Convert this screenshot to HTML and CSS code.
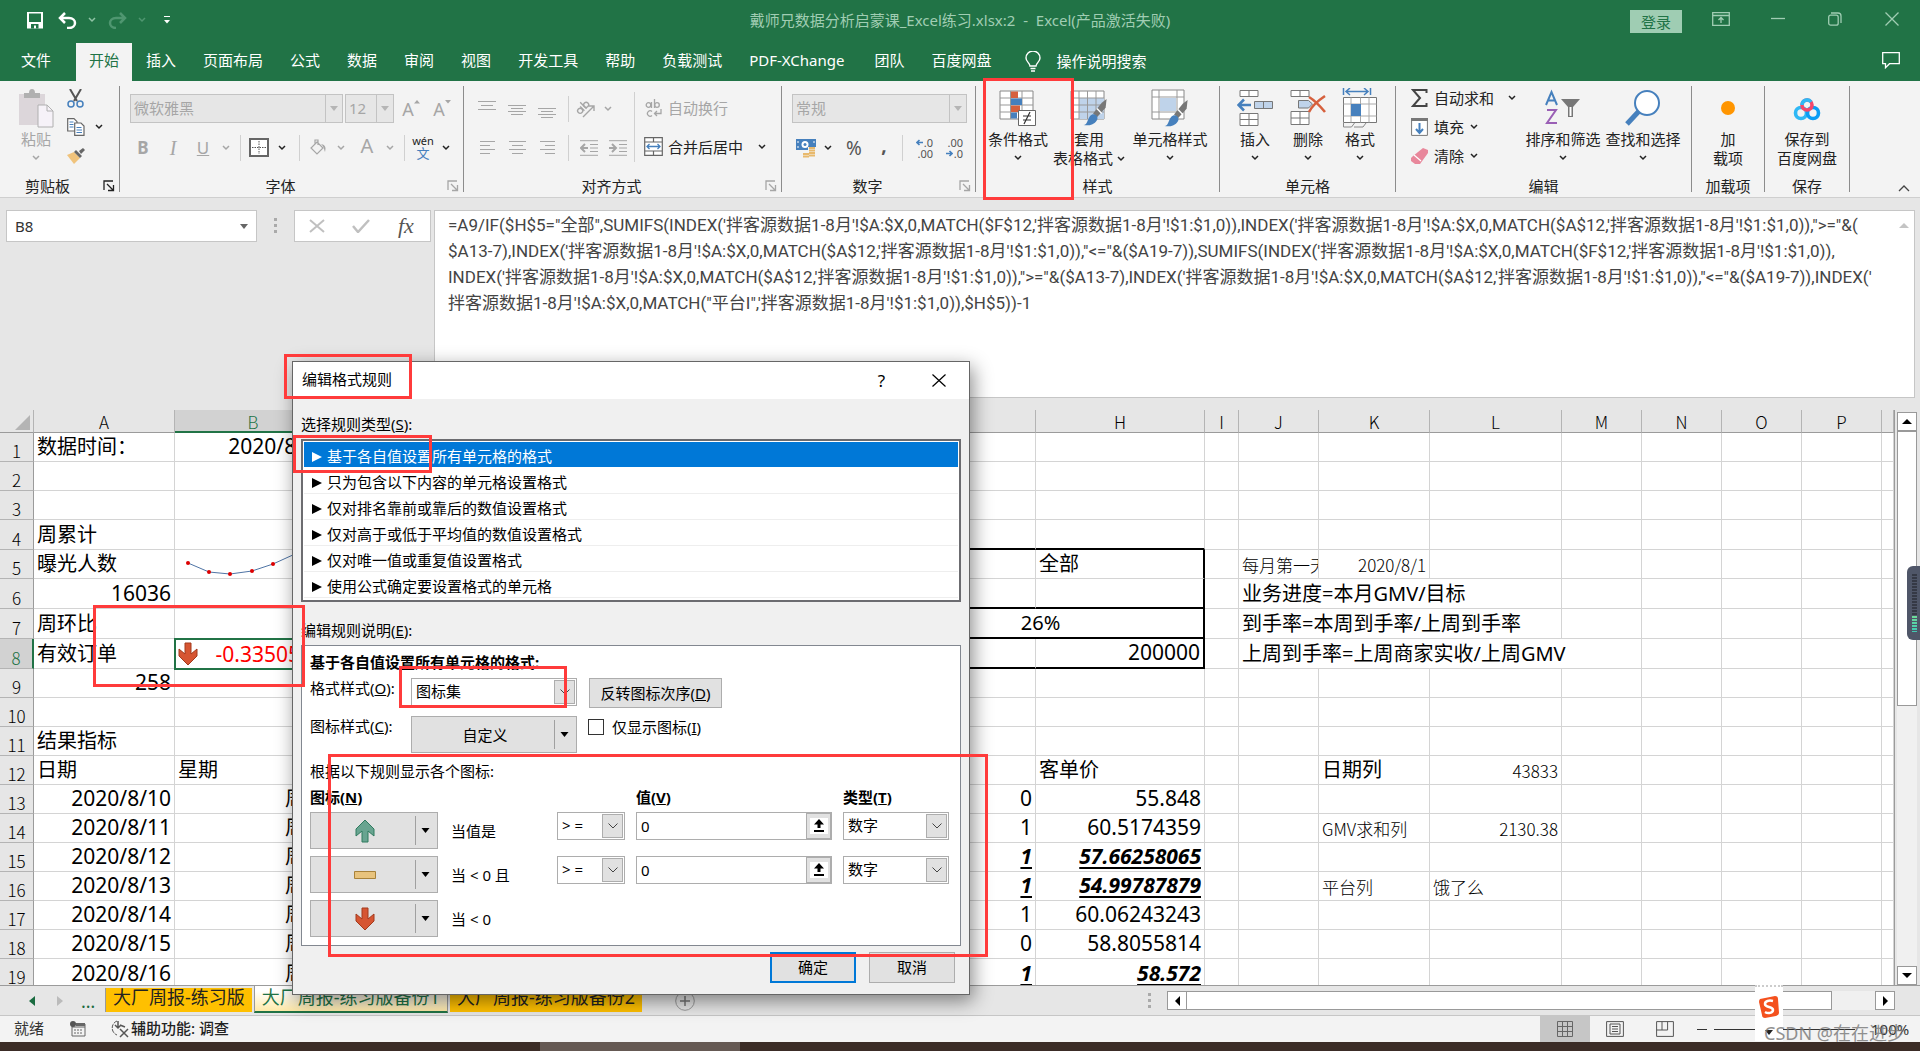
FILE: index.html
```html
<!DOCTYPE html>
<html lang="zh-CN">
<head>
<meta charset="utf-8">
<title>戴师兄数据分析启蒙课_Excel练习.xlsx:2 - Excel</title>
<link rel="stylesheet" href="styles.css">
</head>
<body>
<svg class="defs" width="0" height="0" aria-hidden="true">
  <symbol id="chev" viewBox="0 0 8 6"><path d="M1 1l3 3 3-3" fill="none" stroke="currentColor" stroke-width="1.5"/></symbol>
  <symbol id="launch" viewBox="0 0 12 12"><path d="M1 10V1h9M4 4l6 6M10.500 5v5.500H5" fill="none" stroke="currentColor" stroke-width="1.300"/></symbol>
  <symbol id="tri" viewBox="0 0 8 5"><path d="M0 0h8L4 5z" fill="currentColor"/></symbol>
  <symbol id="thin" viewBox="0 0 10 6"><path d="M.5.5L5 5 9.500.5" fill="none" stroke="#444"/></symbol>
  <symbol id="brush" viewBox="0 0 26 30"><path d="M25 2l-1 9-9 10-4-4 9-11z" fill="#777"/><path d="M15 12l5 5" stroke="#fff" stroke-width="1.500"/><path d="M1 29c5 0 4-9 9-11 4-1 7 3 5 6-3 5-9 6-14 5z" fill="#4680bd"/></symbol>
  <symbol id="up" viewBox="0 0 20 24"><path d="M10 1l9 9v7l-6-5v11H7V12l-6 5v-7z" fill="#68a490" stroke="#2f7a5f"/></symbol>
  <symbol id="down" viewBox="0 0 20 24"><path d="M10 23l9-9V7l-6 5V1H7v11L1 7v7z" fill="#d65532" stroke="#a33a1c"/></symbol>
  <symbol id="pick" viewBox="0 0 18 16"><path d="M0 0h18v16H0z" fill="#fff"/><path d="M9 1l5 5.500h-3.500V10h-3V6.500H4zM4 12h10v2H4z"/></symbol>
</svg>

<header class="titlebar">
  <div class="quick">
    <button class="ib w30" aria-label="保存"><svg width="16" height="17" viewBox="0 0 16 17"><path d="M0 0h16v16.500H0z" fill="#fff"/><path d="M2 1.500h12V10H2zM4 12h7.500v4.500H9V13.500H7v3H4z" fill="#217346"/></svg></button>
    <button class="ib w30" aria-label="撤消"><svg width="19" height="17" viewBox="0 0 19 17"><path d="M7 1L2 6l5 5M2 6h9c8 0 8 10 0 10H9" fill="none" stroke="#fff" stroke-width="2.500"/></svg></button>
    <button class="ib w16 pale"><svg width="8" height="6"><use href="#chev"/></svg></button>
    <button class="ib w30 faint" aria-label="恢复"><svg width="19" height="17" viewBox="0 0 19 17"><path d="M12 1l5 5-5 5M17 6H8C0 6 0 16 8 16" fill="none" stroke="currentColor" stroke-width="2.500"/></svg></button>
    <button class="ib w16 faint"><svg width="8" height="6"><use href="#chev"/></svg></button>
    <button class="ib w30 more"><svg width="6" height="8" viewBox="0 0 6 8"><path d="M0 .5h6" stroke="#fff"/><path d="M0 4h6L3 7.500z" fill="#fff"/></svg></button>
  </div>
  <h1>戴师兄数据分析启蒙课_Excel练习.xlsx:2&nbsp; -&nbsp; Excel(产品激活失败)</h1>
  <div class="wincontrols">
    <button class="login">登录</button>
    <button class="wc" aria-label="功能区选项"><svg width="18" height="14" viewBox="0 0 18 14"><path d="M.7.7h16.600v12.600H.7zM1 3.500h16M9 11V6M6.500 8L9 5.500 11.500 8" fill="none" stroke="currentColor" stroke-width="1.300"/></svg></button>
    <button class="wc" aria-label="最小化"><svg width="14" height="14" viewBox="0 0 14 14"><path d="M0 6.500h14" stroke="currentColor" stroke-width="1.300"/></svg></button>
    <button class="wc" aria-label="还原"><svg width="14" height="14" viewBox="0 0 14 14"><rect x=".7" y="3.200" width="9.500" height="10" rx="2" fill="none" stroke="currentColor" stroke-width="1.300"/><path d="M3 1h7q3 0 3 3v7" fill="none" stroke="currentColor" stroke-width="1.300"/></svg></button>
    <button class="wc" aria-label="关闭"><svg width="14" height="14" viewBox="0 0 14 14"><path d="M.5.5l13 13M13.500.5l-13 13" stroke="currentColor" stroke-width="1.300"/></svg></button>
  </div>
</header>

<nav class="tabs">
  <a href="#" class="file">文件</a><a href="#" class="on">开始</a><a href="#">插入</a><a href="#">页面布局</a><a href="#">公式</a><a href="#">数据</a><a href="#">审阅</a><a href="#">视图</a><a href="#">开发工具</a><a href="#">帮助</a><a href="#">负载测试</a><a href="#" class="pdf">PDF-XChange</a><a href="#">团队</a><a href="#">百度网盘</a>
  <a href="#" class="tell"><svg width="16" height="21" viewBox="0 0 16 21"><path d="M5 15c0-3-4-4-4-8a7 7 0 0 1 14 0c0 4-4 5-4 8zM5.500 17.500h5M6 20h4" fill="none" stroke="#fff" stroke-width="1.400"/></svg>操作说明搜索</a>
  <button class="comment" aria-label="批注"><svg width="18" height="17" viewBox="0 0 18 17"><path d="M.7.7h16.600v11H7.500l-4 4v-4H.7z" fill="none" stroke="#fff" stroke-width="1.300"/></svg></button>
</nav>

<section class="ribbon">
  <div class="group g1">
    <div class="body">
      <button class="big paste"><svg width="36" height="40" viewBox="0 0 36 40"><path d="M1 6h26v31H1z" fill="#dcd6da"/><path d="M6 5h5a3 4 0 0 1 6 0h5v5H6z" fill="#b0b0b0"/><path d="M20 17h9l6 6v16H20z" fill="#f6f2f8" stroke="#b0b0b0"/><path d="M29 17v6h6" fill="none" stroke="#b0b0b0"/></svg><span>粘贴</span><svg width="8" height="6"><use href="#chev"/></svg></button>
      <div class="stack">
        <button class="ib" aria-label="剪切"><svg width="17" height="19" viewBox="0 0 17 19"><path d="M3 0l7 12M14 0L7 12" stroke="#555" stroke-width="2"/><circle cx="4" cy="15" r="3" fill="none" stroke="#4680bd" stroke-width="1.500"/><circle cx="13" cy="15" r="3" fill="none" stroke="#4680bd" stroke-width="1.500"/></svg></button>
        <button class="ib" aria-label="复制"><svg width="18" height="18" viewBox="0 0 18 18"><path d="M.7.7H7l3 3V13H.7z" fill="#fff" stroke="#666" stroke-width="1.200"/><path d="M7.700 5H14l3 3v9.300H7.700z" fill="#fff" stroke="#666" stroke-width="1.200"/><path d="M2.500 4h4M2.500 6.500h4M2.500 9h4M9.500 9.500h5M9.500 12h5.500M9.500 14.500h5.500" stroke="#4680bd"/></svg><svg class="dd" width="8" height="6"><use href="#chev"/></svg></button>
        <button class="ib" aria-label="格式刷"><svg width="18" height="16" viewBox="0 0 18 16"><path d="M0 7l7-3 6 6-6 6z" fill="#f0c37c"/><path d="M7 4l2-2 6 6-2 2zM12 3l4-3 2 2-4 4z" fill="#666"/></svg></button>
      </div>
    </div>
    <div class="cap"><span>剪贴板</span><svg width="12" height="12"><use href="#launch"/></svg></div>
  </div>

  <div class="group g2">
    <div class="body rows">
      <div class="row r1">
        <label class="combo font"><select disabled aria-label="字体"><option>微软雅黑</option></select><svg width="8" height="5"><use href="#tri"/></svg></label>
        <label class="combo size"><select disabled aria-label="字号"><option>12</option></select><svg width="8" height="5"><use href="#tri"/></svg></label>
        <button class="ib w30 dim grow" disabled>A<svg width="6" height="4" viewBox="0 0 6 4"><path d="M0 3.500h6L3 0z" fill="currentColor"/></svg></button>
        <button class="ib w28 dim grow" disabled>A<svg width="6" height="4" viewBox="0 0 6 4"><path d="M0 0h6L3 3.500z" fill="currentColor"/></svg></button>
      </div>
      <div class="row r2">
        <button class="ib w30 dim glyph" disabled><b>B</b></button><button class="ib w30 dim glyph ital" disabled><i>I</i></button><button class="ib w30 dim glyph" disabled><u>U</u></button><button class="ib w16 dim" disabled><svg width="8" height="6"><use href="#chev"/></svg></button>
        <i class="sep"></i>
        <button class="ib w24" aria-label="边框"><svg width="20" height="19" viewBox="0 0 20 19"><path d="M1 1h18v17H1z" fill="#fff" stroke="#666" stroke-width="2"/><path d="M10 3v13M3 9.500h14" stroke="#555" stroke-dasharray="1.500 1"/></svg></button><button class="ib w22"><svg width="8" height="6"><use href="#chev"/></svg></button>
        <i class="sep"></i>
        <button class="ib w24 dim" disabled aria-label="填充颜色"><svg width="17" height="17" viewBox="0 0 17 17"><path d="M7 3l6 6-6 6-6-6zM5 5V1h3v5" fill="none" stroke="currentColor" stroke-width="1.200"/><path d="M11 5c5 1 5 4 4 8-1-3-1-5-4-8z" fill="currentColor"/></svg></button><button class="ib w22 dim" disabled><svg width="8" height="6"><use href="#chev"/></svg></button>
        <button class="ib w30 dim fontcolor" disabled>A</button><button class="ib w16 dim" disabled><svg width="8" height="6"><use href="#chev"/></svg></button>
        <i class="sep"></i>
        <button class="ib w24 wen"><span>wén</span><span>文</span></button><button class="ib w22"><svg width="8" height="6"><use href="#chev"/></svg></button>
      </div>
    </div>
    <div class="cap"><span>字体</span><svg class="dim" width="12" height="12"><use href="#launch"/></svg></div>
  </div>

  <div class="group g3">
    <div class="body cols">
      <div class="rows">
        <div class="row r1">
          <button class="ib w30 dim" disabled aria-label="顶端对齐"><svg width="18" height="18" viewBox="0 0 18 18"><path d="M0 1.500h18M3 5.500h12M0 9.500h18" stroke="currentColor"/></svg></button><button class="ib w30 dim" disabled aria-label="垂直居中"><svg width="18" height="18" viewBox="0 0 18 18"><path d="M0 5.500h18M3 8.500h12M0 11.500h18M3 14.500h12" stroke="currentColor"/></svg></button><button class="ib w30 dim" disabled aria-label="底端对齐"><svg width="18" height="18" viewBox="0 0 18 18"><path d="M0 8.500h18M3 11.500h12M0 14.500h18M3 17.500h12" stroke="currentColor"/></svg></button>
          <i class="sep"></i>
          <button class="ib w22 dim" disabled aria-label="方向"><svg width="20" height="20" viewBox="0 0 20 20"><path d="M7 18L18 7M13 7h5v5" fill="none" stroke="currentColor" stroke-width="1.400"/><g fill="none" stroke="currentColor" stroke-width="1.400" transform="rotate(-45 7 9)"><circle cx="3" cy="9" r="2.500"/><path d="M6 6v6M9 3v9"/><circle cx="11.500" cy="9" r="2.500"/></g></svg></button><button class="ib w22 dim" disabled><svg width="8" height="6"><use href="#chev"/></svg></button>
        </div>
        <div class="row r2">
          <button class="ib w30 dim" disabled aria-label="左对齐"><svg width="15" height="13" viewBox="0 0 15 13"><path d="M0 .5h15M0 4.500h10M0 8.500h15M0 12.500h10" stroke="currentColor"/></svg></button><button class="ib w30 dim" disabled aria-label="居中"><svg width="17" height="13" viewBox="0 0 17 13"><path d="M0 .5h17M3 4.500h11M0 8.500h17M3 12.500h11" stroke="currentColor"/></svg></button><button class="ib w30 dim" disabled aria-label="右对齐"><svg width="15" height="13" viewBox="0 0 15 13"><path d="M0 .5h15M5 4.500h10M0 8.500h15M5 12.500h10" stroke="currentColor"/></svg></button>
          <i class="sep"></i>
          <button class="ib w28 dim" disabled aria-label="减少缩进"><svg width="18" height="16" viewBox="0 0 18 16"><path d="M0 .7h18M10 4.500h8M10 8h8M10 11.500h8M0 15.300h18" stroke="currentColor"/><path d="M8 8H1M5 4L1 8l4 4" stroke="currentColor" stroke-width="2" fill="none"/></svg></button><button class="ib w30 dim" disabled aria-label="增加缩进"><svg width="18" height="16" viewBox="0 0 18 16"><path d="M0 .7h18M10 4.500h8M10 8h8M10 11.500h8M0 15.300h18" stroke="currentColor"/><path d="M0 8h7M3 4l4 4-4 4" stroke="currentColor" stroke-width="2" fill="none"/></svg></button>
        </div>
      </div>
      <i class="sep tall"></i>
      <div class="rows wrap">
        <button class="tb r1 dim" disabled><svg width="19" height="20" viewBox="0 0 19 20"><g fill="none" stroke="currentColor" stroke-width="1.300"><circle cx="4.500" cy="7" r="2.300"/><path d="M7.500 4v6M10.500 1v9M8 13.500a2.700 2.700 0 1 0 0 4M17 11v4.500H10.500M13 13l-2.500 2.500L13 18"/><circle cx="13" cy="7" r="2.300"/></g></svg>自动换行</button>
        <button class="tb r2"><svg width="19" height="19" viewBox="0 0 19 19"><path d="M.7.7h17.600v17.600H.7zM.7 5h17.600M.7 14h17.600M9.500.7V5M9.500 14v4" fill="#fff" stroke="#666" stroke-width="1.200"/><path d="M3 9.500h13M5.500 7L3 9.500 5.500 12M13.500 7L16 9.500 13.500 12" fill="none" stroke="#4680bd" stroke-width="1.300"/></svg>合并后居中<svg class="dd" width="8" height="6"><use href="#chev"/></svg></button>
      </div>
    </div>
    <div class="cap"><span>对齐方式</span><svg class="dim" width="12" height="12"><use href="#launch"/></svg></div>
  </div>

  <div class="group g4">
    <div class="body rows">
      <div class="row r1"><label class="combo num"><select disabled aria-label="数字格式"><option>常规</option></select><svg width="8" height="5"><use href="#tri"/></svg></label></div>
      <div class="row r2">
        <button class="ib w28" aria-label="会计数字格式"><svg width="20" height="20" viewBox="0 0 20 20"><path d="M0 1h20v11H0z" fill="#4680bd"/><circle cx="9" cy="6.500" r="3.500" fill="#fff"/><circle cx="9" cy="6.500" r="1.500" fill="#4680bd"/><path d="M2 3v2M18 3v2M2 8v2" stroke="#fff"/><path d="M12 9h8v9h-8zM6 15h8v5H6z" fill="#f3f3f3"/><path d="M13 10h6M13 12.500h6M13 15h6M13 17.500h6M7 16h6M7 18.500h6" stroke="#e8b96d" stroke-width="1.800"/></svg></button><button class="ib w16"><svg width="8" height="6"><use href="#chev"/></svg></button><button class="ib w36 sym">%</button><button class="ib w24 sym comma">,</button>
        <i class="sep"></i>
        <button class="ib w30 dec" aria-label="增加小数位数"><span class="arr"><svg width="7" height="7" viewBox="0 0 7 7"><path d="M7 3.500H1M3.500 1L1 3.500 3.500 6" fill="none" stroke="#4680bd" stroke-width="1.600"/></svg>.0</span><span>.00</span></button><button class="ib w30 dec" aria-label="减少小数位数"><span>.00</span><span class="arr"><svg width="7" height="7" viewBox="0 0 7 7"><path d="M0 3.500h6M3.500 1L6 3.500 3.500 6" fill="none" stroke="#4680bd" stroke-width="1.600"/></svg>.0</span></button>
      </div>
    </div>
    <div class="cap"><span>数字</span><svg class="dim" width="12" height="12"><use href="#launch"/></svg></div>
  </div>

  <div class="group g5">
    <div class="body">
      <button class="big w74"><svg width="38" height="36" viewBox="0 0 38 36"><path d="M1 1h33v28H1z" fill="#fff" stroke="#888"/><path d="M1 8h33M1 15h33M1 22h33M11.500 1v28M23 1v28" stroke="#999"/><path d="M12 1.500h7V8h-7zM12 15.500h9V22h-9z" fill="#d6603d"/><path d="M12 8.500h11V15H12zM12 22.500h6v6h-6z" fill="#4680bd"/><path d="M19.500 20.500h17v15h-17z" fill="#fff" stroke="#666"/><path d="M24 26h8M24 30h8M31 22l-6 12" stroke="#333" stroke-width="1.200"/></svg><span>条件格式</span><svg width="8" height="6"><use href="#chev"/></svg></button>
      <button class="big w68"><svg width="38" height="36" viewBox="0 0 38 36"><path d="M1 1h33v28H1z" fill="#fff" stroke="#888"/><path d="M9 8h25v21H9z" fill="#bfd3ea"/><path d="M1 8h33M1 15h33M1 22h33M9 1v28M17.500 1v28M26 1v28" stroke="#999"/><use href="#brush" x="12" y="7" width="26" height="29"/></svg><span>套用</span><span class="l2">表格格式<svg width="8" height="6"><use href="#chev"/></svg></span></button>
      <button class="big w94"><svg width="38" height="38" viewBox="0 0 38 38"><path d="M1 1h32v29H1z" fill="#fff" stroke="#888"/><path d="M1 8h32M1 23h32M8 1v29M26 1v29" stroke="#999"/><path d="M9 9h16v13H9z" fill="#bfd3ea"/><use href="#brush" x="12" y="9" width="26" height="29"/></svg><span>单元格样式</span><svg width="8" height="6"><use href="#chev"/></svg></button>
    </div>
    <div class="cap"><span>样式</span></div>
  </div>

  <div class="group g6">
    <div class="body">
      <button class="big w54"><svg width="36" height="38" viewBox="0 0 36 38"><path d="M3 1.500h18v6H3zM12 1.500v6M3 24.500h18v12H3zM12 24.500v12M3 30.500h18" fill="#fff" stroke="#777"/><path d="M17.500 12.500h18v7h-18zM26.500 12.500v7" fill="#bfd3ea" stroke="#777"/><path d="M14 16H2M7 10.500L1.500 16 7 21.500" fill="none" stroke="#4680bd" stroke-width="2.600"/></svg><span>插入</span><svg width="8" height="6"><use href="#chev"/></svg></button>
      <button class="big w52"><svg width="36" height="38" viewBox="0 0 36 38"><path d="M1 1.500h18v6H1zM10 1.500v6M1 22.500h18v13H1zM10 22.500v13M1 29h18" fill="#fff" stroke="#777"/><path d="M8.500 11.500h10l4 3.500-4 4h-10z" fill="#bfd3ea" stroke="#777"/><path d="M19 8c5 3 11 9 16 15M35 7c-6 4-13 10-16 16" fill="none" stroke="#d6603d" stroke-width="2.600"/></svg><span>删除</span><svg width="8" height="6"><use href="#chev"/></svg></button>
      <button class="big w52"><svg width="36" height="40" viewBox="0 0 36 40"><path d="M1.500 0v7M28.500 0v7M4 3.500h22M8 0L4 3.500 8 7M22 0l4 3.500L22 7" fill="none" stroke="#4680bd" stroke-width="1.500"/><path d="M1.500 9.500h33v25h-33z" fill="#fff" stroke="#777"/><path d="M1.500 16h33M1.500 28h33M9 9.500v25M18.500 9.500v25M27 9.500v25" stroke="#aaa"/><path d="M9 16h10v12H9z" fill="#4680bd"/><path d="M1.500 35v4h8l3-4M12 39h9l3-4" fill="none" stroke="#888"/></svg><span>格式</span><svg width="8" height="6"><use href="#chev"/></svg></button>
    </div>
    <div class="cap"><span>单元格</span></div>
  </div>

  <div class="group g7">
    <div class="body">
      <div class="stack edit">
        <button class="tb"><svg width="17" height="18" viewBox="0 0 17 18"><path d="M15.500 4V1H2l7 8-7 8h13.500v-3" fill="none" stroke="#444" stroke-width="2"/></svg>自动求和<svg class="dd far" width="8" height="6"><use href="#chev"/></svg></button>
        <button class="tb"><svg width="17" height="18" viewBox="0 0 17 18"><path d="M.6.6h15.800v16.800H.6z" fill="#fff" stroke="#777"/><path d="M0 0h17v3H0z" fill="#777"/><path d="M8.500 5v10M5 11l3.500 4 3.500-4" fill="none" stroke="#4680bd" stroke-width="2"/></svg>填充<svg class="dd" width="8" height="6"><use href="#chev"/></svg></button>
        <button class="tb"><svg width="17" height="18" viewBox="0 0 17 18"><path d="M12 1l5 2v3l-8 11H4l-4-3v-3l2-2z" fill="#e8879b"/><path d="M3 8l7 6" stroke="#fff" stroke-width="1.200"/></svg>清除<svg class="dd" width="8" height="6"><use href="#chev"/></svg></button>
      </div>
      <button class="big w80"><svg width="36" height="36" viewBox="0 0 36 36"><g fill="none" stroke-width="2"><path d="M1 15L6.500 2 12 15M3 10.500h7" stroke="#4680bd"/><path d="M2 20h9L2 33h10" stroke="#9a5fb5"/></g><path d="M16 9h19l-7 8v10h-5V17z" fill="#777"/><path d="M24.500 17h2v9h-2z" fill="#fff"/></svg><span>排序和筛选</span><svg width="8" height="6"><use href="#chev"/></svg></button>
      <button class="big w80"><svg width="36" height="36" viewBox="0 0 36 36"><path d="M2 34l13-14" stroke="#4680bd" stroke-width="5"/><circle cx="22" cy="13" r="12" fill="#fff" stroke="#4680bd" stroke-width="2"/></svg><span>查找和选择</span><svg width="8" height="6"><use href="#chev"/></svg></button>
    </div>
    <div class="cap"><span>编辑</span></div>
  </div>

  <div class="group g8">
    <div class="body"><button class="big fill"><svg width="36" height="36" viewBox="0 0 36 36"><circle cx="18" cy="18" r="7" fill="#ff9500"/></svg><span>加</span><span class="l2">载项</span></button></div>
    <div class="cap"><span>加载项</span></div>
  </div>
  <div class="group g9">
    <div class="body"><button class="big fill"><svg width="36" height="36" viewBox="0 0 36 36"><circle cx="12" cy="23" r="5.500" fill="none" stroke="#2fb8f5" stroke-width="3.600"/><circle cx="24" cy="23" r="5.500" fill="none" stroke="#0a9df5" stroke-width="3.600"/><circle cx="18" cy="15" r="5" fill="none" stroke="#f5476b" stroke-width="3.600"/><path d="M13 15a5 5 0 0 1 9-3" fill="none" stroke="#2fb8f5" stroke-width="3.600"/></svg><span>保存到</span><span class="l2">百度网盘</span></button></div>
    <div class="cap"><span>保存</span></div>
  </div>
  <button class="collapse" aria-label="折叠功能区"><svg width="12" height="7" viewBox="0 0 12 7"><path d="M1 6l5-5 5 5" fill="none" stroke="#444" stroke-width="1.300"/></svg></button>
</section>

<section class="formula">
  <label class="namebox"><input value="B8" aria-label="名称框"><svg width="8" height="5"><use href="#tri"/></svg></label>
  <i class="dots"></i>
  <div class="fx">
    <button aria-label="取消"><svg width="16" height="14" viewBox="0 0 16 14"><path d="M1 1l14 12M15 1L1 13" stroke="#c0c0c0" stroke-width="2"/></svg></button>
    <button aria-label="输入"><svg width="18" height="14" viewBox="0 0 18 14"><path d="M1 7l5 6L17 1" fill="none" stroke="#c0c0c0" stroke-width="2.500"/></svg></button>
    <button class="fn"><i>fx</i></button>
  </div>
  <div class="fbox">
<textarea aria-label="编辑栏" spellcheck="false">=A9/IF($H$5="全部",SUMIFS(INDEX('拌客源数据1-8月'!$A:$X,0,MATCH($F$12,'拌客源数据1-8月'!$1:$1,0)),INDEX('拌客源数据1-8月'!$A:$X,0,MATCH($A$12,'拌客源数据1-8月'!$1:$1,0)),"&gt;="&amp;(
$A13-7),INDEX('拌客源数据1-8月'!$A:$X,0,MATCH($A$12,'拌客源数据1-8月'!$1:$1,0)),"&lt;="&amp;($A19-7)),SUMIFS(INDEX('拌客源数据1-8月'!$A:$X,0,MATCH($F$12,'拌客源数据1-8月'!$1:$1,0)),
INDEX('拌客源数据1-8月'!$A:$X,0,MATCH($A$12,'拌客源数据1-8月'!$1:$1,0)),"&gt;="&amp;($A13-7),INDEX('拌客源数据1-8月'!$A:$X,0,MATCH($A$12,'拌客源数据1-8月'!$1:$1,0)),"&lt;="&amp;($A19-7)),INDEX('
拌客源数据1-8月'!$A:$X,0,MATCH("平台I",'拌客源数据1-8月'!$1:$1,0)),$H$5))-1</textarea>
    <svg width="10" height="5" viewBox="0 0 10 5"><path d="M0 5h10L5 0z" fill="#c4c4c4"/></svg>
  </div>
</section>

<main class="sheet">
  <div class="grid">
  <table>
    <colgroup><col class="c0"><col class="ca"><col class="cb"><col class="ccf"><col class="cg"><col class="ch"><col class="ci"><col class="cj"><col class="ck"><col class="cl"><col class="cm"><col class="cm"><col class="cm"><col class="cm"><col></colgroup>
    <thead><tr><th class="corner"><svg width="15" height="15" viewBox="0 0 15 15"><path d="M15 0v15H0z" fill="#b4b4b4"/></svg></th><th>A</th><th class="on">B</th><th></th><th></th><th>H</th><th>I</th><th>J</th><th>K</th><th>L</th><th>M</th><th>N</th><th>O</th><th>P</th><th></th></tr></thead>
    <tbody>
    <tr><th>1</th><td>数据时间：</td><td class="n">2020/8/10</td><td></td><td></td><td></td><td></td><td></td><td></td><td></td><td></td><td></td><td></td><td></td><td></td></tr>
    <tr><th>2</th><td></td><td></td><td></td><td></td><td></td><td></td><td></td><td></td><td></td><td></td><td></td><td></td><td></td><td></td></tr>
    <tr><th>3</th><td></td><td></td><td></td><td></td><td></td><td></td><td></td><td></td><td></td><td></td><td></td><td></td><td></td><td></td></tr>
    <tr class="t"><th>4</th><td>周累计</td><td></td><td></td><td class="kb"></td><td class="kb"></td><td></td><td></td><td></td><td></td><td></td><td></td><td></td><td></td><td></td></tr>
    <tr><th>5</th><td>曝光人数</td><td class="spark"><svg width="150" height="28" viewBox="0 0 150 28"><path d="M13 13l21 9 21 2 22-3 21-7 22-10" fill="none" stroke="#4f74a5"/><g fill="#d00"><circle cx="13" cy="13" r="2"/><circle cx="34" cy="22" r="2"/><circle cx="55" cy="24" r="2"/><circle cx="77" cy="21" r="2"/><circle cx="98" cy="14" r="2"/><circle cx="120" cy="4" r="2"/></g></svg></td><td></td><td></td><td class="kr">全部</td><td></td><td class="d">每月第一天</td><td class="d n">2020/8/1</td><td></td><td></td><td></td><td></td><td></td><td></td></tr>
    <tr class="t"><th>6</th><td class="n">16036</td><td></td><td></td><td class="kb"></td><td class="kb kr"></td><td></td><td colspan="3">业务进度=本月GMV/目标</td><td></td><td></td><td></td><td></td><td></td></tr>
    <tr class="t"><th>7</th><td>周环比</td><td></td><td></td><td class="kb kr mid" colspan="2">26%</td><td></td><td colspan="3">到手率=本周到手率/上周到手率</td><td></td><td></td><td></td><td></td><td></td></tr>
    <tr class="t"><th class="on">8</th><td>有效订单</td><td class="n sel"><div><svg width="20" height="24"><use href="#down"/></svg>-0.3350515</div></td><td></td><td class="kb"></td><td class="n kb kr">200000</td><td></td><td colspan="4">上周到手率=上周商家实收/上周GMV</td><td></td><td></td><td></td><td></td></tr>
    <tr><th>9</th><td class="n">258</td><td></td><td></td><td></td><td></td><td></td><td></td><td></td><td></td><td></td><td></td><td></td><td></td><td></td></tr>
    <tr><th>10</th><td></td><td></td><td></td><td></td><td></td><td></td><td></td><td></td><td></td><td></td><td></td><td></td><td></td><td></td></tr>
    <tr><th>11</th><td>结果指标</td><td></td><td></td><td></td><td></td><td></td><td></td><td></td><td></td><td></td><td></td><td></td><td></td><td></td></tr>
    <tr><th>12</th><td>日期</td><td>星期</td><td></td><td></td><td>客单价</td><td></td><td></td><td>日期列</td><td class="d n">43833</td><td></td><td></td><td></td><td></td><td></td></tr>
    <tr><th>13</th><td class="n">2020/8/10</td><td class="w">周一</td><td></td><td class="n">0</td><td class="n">55.848</td><td></td><td></td><td></td><td></td><td></td><td></td><td></td><td></td><td></td></tr>
    <tr><th>14</th><td class="n">2020/8/11</td><td class="w">周二</td><td></td><td class="n">1</td><td class="n">60.5174359</td><td></td><td></td><td class="d">GMV求和列</td><td class="d n">2130.38</td><td></td><td></td><td></td><td></td><td></td></tr>
    <tr><th>15</th><td class="n">2020/8/12</td><td class="w">周三</td><td></td><td class="n em">1</td><td class="n em">57.66258065</td><td></td><td></td><td></td><td></td><td></td><td></td><td></td><td></td><td></td></tr>
    <tr><th>16</th><td class="n">2020/8/13</td><td class="w">周四</td><td></td><td class="n em">1</td><td class="n em">54.99787879</td><td></td><td></td><td class="d">平台列</td><td class="d">饿了么</td><td></td><td></td><td></td><td></td><td></td></tr>
    <tr><th>17</th><td class="n">2020/8/14</td><td class="w">周五</td><td></td><td class="n">1</td><td class="n">60.06243243</td><td></td><td></td><td></td><td></td><td></td><td></td><td></td><td></td><td></td></tr>
    <tr><th>18</th><td class="n">2020/8/15</td><td class="w">周六</td><td></td><td class="n">0</td><td class="n">58.8055814</td><td></td><td></td><td></td><td></td><td></td><td></td><td></td><td></td><td></td></tr>
    <tr><th>19</th><td class="n">2020/8/16</td><td class="w">周日</td><td></td><td class="n em">1</td><td class="n em">58.572</td><td></td><td></td><td></td><td></td><td></td><td></td><td></td><td></td><td></td></tr>
    </tbody>
  </table>
  </div>
  <div class="vscroll">
    <button aria-label="向上"><svg width="10" height="5" viewBox="0 0 10 5"><path d="M0 5h10L5 0z"/></svg></button>
    <i class="thumb"></i><i class="track"></i>
    <button aria-label="向下"><svg width="10" height="5" viewBox="0 0 10 5"><path d="M0 0h10L5 5z"/></svg></button>
  </div>
</main>

<div class="sheettabs">
  <button class="nav"><svg width="6" height="10" viewBox="0 0 6 10"><path d="M6 0v10L0 5z" fill="#1a6b40"/></svg></button>
  <button class="nav"><svg width="6" height="10" viewBox="0 0 6 10"><path d="M0 0v10l6-5z" fill="#bbb"/></svg></button>
  <button class="nav">…</button>
  <a href="#" class="tab first">大厂周报-练习版</a>
  <a href="#" class="tab cur">大厂周报-练习版备份1</a>
  <a href="#" class="tab">大厂周报-练习版备份2</a>
  <button class="add" aria-label="新工作表"><svg width="20" height="20" viewBox="0 0 20 20"><circle cx="10" cy="10" r="9.300" fill="none" stroke="#999"/><path d="M10 5v10M5 10h10" stroke="#777" stroke-width="1.500"/></svg></button>
  <i class="dots"></i>
  <div class="hscroll">
    <button aria-label="向左"><svg width="5" height="10" viewBox="0 0 5 10"><path d="M5 0v10L0 5z"/></svg></button>
    <i class="thumb"></i><i class="track"></i>
    <button aria-label="向右"><svg width="5" height="10" viewBox="0 0 5 10"><path d="M0 0v10l5-5z"/></svg></button>
  </div>
</div>

<footer class="status">
  <span class="ready">就绪</span>
  <svg width="16" height="16" viewBox="0 0 16 16"><path d="M2 3h13v12H2zM2 6h13" fill="none" stroke="#666"/><path d="M6 2h9v3H6z" fill="#666"/><circle cx="3" cy="3" r="3" fill="#555"/><path d="M4 9h9M4 12h9" stroke="#666" stroke-dasharray="2 1"/></svg>
  <svg class="acc" width="20" height="18" viewBox="0 0 20 18"><path d="M8 1a7.500 7.500 0 0 0 0 14" fill="none" stroke="#555" stroke-dasharray="4 1"/><path d="M9 1v6M6 5l3 3 3-3M11 5l5 2M11 9l8 8M19 9l-8 8" fill="none" stroke="#555" stroke-width="1.500"/></svg>
  <b>辅助功能: 调查</b>
  <div class="views">
    <button class="on" aria-label="普通"><svg width="16" height="16" viewBox="0 0 16 16"><path d="M.5.5h15v15H.5zM.5 5.500h15M.5 10.500h15M5.500.5v15M10.500.5v15" fill="none" stroke="#666"/></svg></button>
    <button aria-label="页面布局"><svg width="18" height="16" viewBox="0 0 18 16"><path d="M.6.6h16.800v14.800H.6zM4 3h10v10H4zM6 5.500h6M6 8h6M6 10.500h6" fill="none" stroke="#555"/></svg></button>
    <button aria-label="分页预览"><svg width="18" height="16" viewBox="0 0 18 16"><path d="M.6.6h16.800v14.800H.6zM.6 9h11V.6M6 .6V9" fill="none" stroke="#555"/></svg></button>
    <i class="minus"></i><i class="rail"></i><span class="zoom">100%</span>
  </div>
</footer>
<div class="taskbar"><i></i></div>

<div class="meter"><i></i></div>
<div class="ime"><svg width="22" height="24" viewBox="0 0 22 24"><path d="M2 4l15-3q3 0 3 3l1 14q0 2-3 3L7 23q-3 0-3-3L1 7q0-2 1-3z" fill="#f4511e"/><path d="M15 6c-4-1-8 0-8 3 0 4 8 2 8 6 0 3-5 4-8 2" fill="none" stroke="#fff" stroke-width="2.500"/></svg><svg width="10" height="5"><use href="#tri"/></svg></div>
<div class="mark">CSDN @在在进步</div>

<div class="dialog" role="dialog" aria-labelledby="dt">
  <div class="dtitle"><h2 id="dt">编辑格式规则</h2><button>?</button><button aria-label="关闭"><svg width="14" height="13" viewBox="0 0 14 13"><path d="M.5.5l13 12M13.500.5l-13 12" stroke="#000" stroke-width="1.200"/></svg></button></div>
  <div class="dbody">
    <div class="lab l1">选择规则类型(<u>S</u>):</div>
    <ul class="rules">
      <li class="on">基于各自值设置所有单元格的格式</li>
      <li>只为包含以下内容的单元格设置格式</li>
      <li>仅对排名靠前或靠后的数值设置格式</li>
      <li>仅对高于或低于平均值的数值设置格式</li>
      <li>仅对唯一值或重复值设置格式</li>
      <li>使用公式确定要设置格式的单元格</li>
    </ul>
    <div class="lab l2">编辑规则说明(<u>E</u>):</div>
    <div class="desc">
      <strong>基于各自值设置所有单元格的格式:</strong>
      <div class="frow fa">
        <label for="fs">格式样式(<u>O</u>):</label>
        <span class="dsel s166"><select id="fs"><option>图标集</option></select><i><svg width="10" height="6"><use href="#thin"/></svg></i></span>
        <button class="btn rev">反转图标次序(<u>D</u>)</button>
      </div>
      <div class="frow fb">
        <label for="is">图标样式(<u>C</u>):</label>
        <button id="is" class="split s166"><span>自定义</span><i><svg width="9" height="5"><use href="#tri"/></svg></i></button>
        <label class="chk"><input type="checkbox"><span>仅显示图标(<u>I</u>)</span></label>
      </div>
      <p>根据以下规则显示各个图标:</p>
      <div class="irow head"><b>图标(<u>N</u>)</b><b class="k4">值(<u>V</u>)</b><b class="k5">类型(<u>T</u>)</b></div>
      <div class="irow">
        <button class="split"><span><svg width="20" height="24"><use href="#up"/></svg></span><i><svg width="9" height="5"><use href="#tri"/></svg></i></button>
        <span class="when">当值是</span>
        <span class="dsel"><select aria-label="比较"><option>&gt; =</option></select><i><svg width="10" height="6"><use href="#thin"/></svg></i></span>
        <span class="val"><input value="0" aria-label="值"><button aria-label="选取"><svg width="18" height="16"><use href="#pick"/></svg></button></span>
        <span class="dsel"><select aria-label="类型"><option>数字</option></select><i><svg width="10" height="6"><use href="#thin"/></svg></i></span>
      </div>
      <div class="irow">
        <button class="split"><span><svg width="22" height="8" viewBox="0 0 22 8"><path d="M.5.5h21v7H.5z" fill="#e8c37d" stroke="#a8823a"/></svg></span><i><svg width="9" height="5"><use href="#tri"/></svg></i></button>
        <span class="when">当 &lt; 0 且</span>
        <span class="dsel"><select aria-label="比较"><option>&gt; =</option></select><i><svg width="10" height="6"><use href="#thin"/></svg></i></span>
        <span class="val"><input value="0" aria-label="值"><button aria-label="选取"><svg width="18" height="16"><use href="#pick"/></svg></button></span>
        <span class="dsel"><select aria-label="类型"><option>数字</option></select><i><svg width="10" height="6"><use href="#thin"/></svg></i></span>
      </div>
      <div class="irow">
        <button class="split"><span><svg width="20" height="24"><use href="#down"/></svg></span><i><svg width="9" height="5"><use href="#tri"/></svg></i></button>
        <span class="when">当 &lt; 0</span>
      </div>
    </div>
    <div class="actions"><button class="btn ok">确定</button><button class="btn">取消</button></div>
  </div>
</div>

<i class="box b1"></i><i class="box b2"></i><i class="box b3"></i><i class="box b4"></i><i class="box b5"></i><i class="box b6"></i>
</body>
</html>
```
FILE: styles.css
```css
* { box-sizing: border-box; }
html, body { margin: 0; height: 100%; }
body {
  display: flex; flex-direction: column; height: 100vh; overflow: hidden; position: relative;
  background: #e6e6e6; color: #222;
  font: 15px/20px "Noto Sans", "Noto Sans CJK SC", sans-serif;
}
button, input, select, textarea { font: inherit; color: inherit; margin: 0; padding: 0; border: 0; background: none; border-radius: 0; }
button { display: flex; align-items: center; justify-content: center; white-space: nowrap; }
select { appearance: none; opacity: 1; }
a { color: inherit; text-decoration: none; }
svg { flex: none; display: block; }
.defs { position: absolute; }
.ib { height: 24px; flex: none; }
.w16 { width: 16px; } .w22 { width: 22px; } .w24 { width: 24px; } .w28 { width: 28px; } .w30 { width: 30px; } .w36 { width: 36px; }
.dim { color: #a6a6a6; }

/* title bar */
.titlebar { display: flex; flex: none; height: 43px; background: #217346; color: #a0cdb3; position: relative; justify-content: space-between; }
.quick { display: flex; align-items: center; height: 40px; padding-left: 20px; gap: 2px; }
.quick .pale { color: #8fc3a5; }
.quick .faint { color: #4f9670; }
.titlebar h1 { position: absolute; inset: 0; margin: 0; text-align: center; font-size: 15px; font-weight: 400; line-height: 40px; pointer-events: none; }
.wincontrols { display: flex; align-items: center; height: 38px; }
.login { width: 52px; height: 23px; margin: 5px 10px 0 0; background: #9fcdb3; color: #217346; }
.wc { width: 57px; height: 38px; }

/* tab strip */
.tabs { display: flex; flex: none; gap: 1px; height: 38px; background: #217346; color: #fff; line-height: 35px; white-space: nowrap; }
.tabs a { padding: 0 13px; }
.tabs .file { padding: 0 24px 0 21px; }
.tabs .pdf { padding-right: 16px; }
.tabs .on { background: #f3f3f3; color: #217346; }
.tabs .tell { display: flex; align-items: center; gap: 15px; margin: 0 0 0 7px; height: 36px; }
.comment { margin: 0 20px 3px auto; }

/* ribbon */
.ribbon { display: flex; flex: none; height: 117px; background: #f3f3f3; border-bottom: 1px solid #cfcfcf; padding: 5px 0; }
.group { display: flex; flex-direction: column; flex: none; height: 106px; border-right: 1px solid #8c8c8c; }
.g1 { width: 120px; } .g2 { width: 344px; } .g3 { width: 318px; } .g4 { width: 194px; } .g5 { width: 244px; }
.g6 { width: 176px; } .g7 { width: 296px; } .g8 { width: 73px; } .g9 { width: 85px; }
.body { display: flex; height: 89px; }
.cap { display: flex; align-items: center; height: 17px; padding: 4px 4px 0; line-height: 20px; }
.cap span { flex: 1; text-align: center; }
.g2 .cap span, .g3 .cap span, .g4 .cap span { padding-right: 10px; }
.g1 .cap span { padding-right: 12px; }
.big { flex-direction: column; justify-content: flex-start; gap: 0; color: #222; line-height: 19px; }
.big > svg:first-child { height: 40px; margin: 2px 0; }
.big > svg:last-child { margin-top: 6px; }
.big .l2 { display: flex; align-items: center; gap: 4px; }
.paste { width: 60px; color: #a6a6a6; padding-left: 12px; }
.stack { display: flex; flex-direction: column; gap: 5px; align-items: flex-start; }
.stack .ib { padding-left: 7px; }
.dd { margin-left: 10px; }
.rows { display: flex; flex-direction: column; }
.row { display: flex; align-items: center; }
.r1 { height: 45px; } .r2 { height: 33px; }
.g2 .row { padding-left: 8px; }
.g2 .r1 { padding-left: 10px; gap: 2px; }
.sep { flex: none; width: 1px; height: 26px; margin: 0 6px; background: #d0d0d0; }
.combo { display: flex; align-items: center; height: 29px; border: 1px solid #c3c3c3; background: #e6e6e6; color: #a6a6a6; }
.combo select { flex: 1; min-width: 0; height: 27px; padding: 0 0 2px 3px; border-right: 1px solid #c3c3c3; color: #a6a6a6; }
.combo svg { margin: 0 4px; color: #b5b5b5; }
.combo.font { width: 213px; } .combo.size { width: 49px; } .combo.num { width: 175px; }
.grow { font-size: 18px; }
.grow svg { margin-bottom: 14px; }
.glyph { font-size: 17px; }
.ital { font-family: "Liberation Serif", serif; font-size: 20px; }
.fontcolor { font-size: 20px; padding-bottom: 4px; }
.wen { flex-direction: column; font-size: 11px; line-height: 9px; gap: 2px; }
.wen span + span { color: #4680bd; font-size: 13px; line-height: 13px; }
.cols > .rows:first-child { width: 164px; padding-left: 8px; }
.sep.tall { height: 70px; margin: 6px 9px 0 6px; }
.tb { justify-content: flex-start; gap: 5px; }
.tb.r1 { height: 43px; }
.tb.r2 { height: 35px; }
.tb .dd { margin-left: 10px; }
.g4 .row { padding-left: 10px; }
.sym { font-size: 19px; color: #555; }
.comma { font-weight: 700; padding-bottom: 6px; }
.dec { flex-direction: column; align-items: flex-end; padding-right: 6px; font-size: 11px; line-height: 11px; color: #555; }
.arr { display: flex; align-items: center; gap: 1px; }
.g5 .body { padding-left: 5px; }
.w74 { width: 74px; } .w68 { width: 68px; } .w94 { width: 94px; }
.g6 .body { padding-left: 8px; }
.w54 { width: 54px; } .w52 { width: 52px; }
.edit { width: 127px; padding: 2px 0 0 15px; gap: 9px; }
.edit .tb { gap: 6px; }
.edit .dd { margin-left: 0; }
.edit .far { margin-left: 8px; }
.w80 { width: 80px; }
.fill { width: 100%; }
.collapse { margin: 96px 10px 0 auto; height: 12px; }

/* formula bar */
.formula { display: flex; flex: none; align-items: flex-start; padding: 12px 5px 12px 6px; height: 212px; }
.namebox { display: flex; align-items: center; width: 251px; height: 32px; padding: 0 8px; background: #fff; border: 1px solid #c6c6c6; color: #666; }
.namebox input { flex: 1; min-width: 0; color: #333; font-size: 15px; }
.dots { width: 3px; height: 15px; margin: 8px 17px 0 17px; background: repeating-linear-gradient(#aaa 0 3px, transparent 3px 6px); }
.fx { display: flex; align-items: center; width: 137px; height: 32px; background: #fff; border: 1px solid #c6c6c6; padding-right: 2px; }
.fx button { flex: 1; height: 30px; }
.fn { font: italic 22px "Liberation Serif", serif; color: #555; }
.fbox { display: flex; flex: 1; align-items: flex-start; height: 188px; margin-left: 3px; background: #fff; border: 1px solid #c6c6c6; padding: 1px 5px 0 13px; }
.fbox textarea { flex: 1; min-width: 0; height: 160px; resize: none; overflow: hidden; white-space: pre; font: 17px/26px Roboto, "Noto Sans CJK SC", sans-serif; color: #444; }
.fbox svg { margin-top: 11px; }

/* sheet */
.sheet { display: flex; flex: 1; min-height: 0; border-bottom: 1px solid #9b9b9b; }
.grid { flex: 1; min-width: 0; overflow: hidden; background: #fff; border-right: 1px solid #9b9b9b; }
table { table-layout: fixed; width: 100%; border-collapse: separate; border-spacing: 0; color: #000; font-size: 20px; line-height: 24px; }
.c0 { width: 34px; } .ca { width: 141px; } .cb { width: 157px; } .ccf { width: 546px; } .cg { width: 158px; } .ch { width: 169px; }
.ci { width: 34px; } .cj { width: 80px; } .ck { width: 111px; } .cl { width: 132px; } .cm { width: 80px; }
td { height: 29px; padding: 0 3px; border: solid #d4d4d4; border-width: 0 1px 1px 0; overflow: hidden; white-space: nowrap; vertical-align: middle; }
.t td, .t th { height: 30px; }
tr:last-child td { border-bottom: 0; }
th { padding: 0; font: 300 17px/22px "Noto Sans CJK SC", sans-serif; color: #000; background: #e6e6e6; text-align: center; border: solid #9b9b9b; border-width: 0 1px 1px 0; }
thead th { height: 23px; padding-top: 2px; line-height: 20px; border-right-color: #b4b4b4; }
tbody th { vertical-align: bottom; border-bottom-color: #b4b4b4; line-height: 20px; }
thead th.on { background: #d2d2d2; color: #217346; border-bottom: 2px solid #217346; line-height: 19px; }
tbody th.on { background: #d2d2d2; color: #217346; border-right: 2px solid #217346; }
.corner svg { margin-left: 15px; }
.n, .w { text-align: right; }
.n { font-size: 21px; padding-bottom: 2px; }
.w { padding-right: 6px; }
.d { font-family: "Noto Sans CJK SC", sans-serif; font-size: 17px; font-weight: 300; vertical-align: bottom; padding-bottom: 1px; }
.mid { text-align: center; }
.kb { border-bottom: 2px solid #000; }
.kr { border-right: 2px solid #000; }
.em { font-weight: 700; font-style: italic; text-decoration: underline; text-underline-offset: 3px; }
.spark { padding: 0; }
.sel { padding: 0 7px 0 3px; color: #f00; outline: 2px solid #217346; outline-offset: -1px; }
.sel div { display: flex; justify-content: space-between; }
.vscroll { display: flex; flex-direction: column; width: 25px; padding: 2px 3px 0 2px; }
.vscroll button, .hscroll button { width: 20px; height: 19px; background: #fff; border: 1px solid #999; flex: none; }
.thumb { background: #fff; border: 1px solid #999; }
.track { background: #f0f0f0; flex: 1; }
.vscroll .thumb { height: 275px; }

/* sheet tabs */
.sheettabs { display: flex; flex: none; height: 30px; padding-left: 18px; border-bottom: 1px solid #c6c6c6; font-size: 18px; line-height: 18px; white-space: nowrap; color: #222; }
.nav { width: 28px; height: 30px; color: #1a6b40; }
.tab { height: 24px; margin: 2px 2px 0 0; padding: 0 7px; background: #ffc000; }
.tab.first { border-left: 1px solid #999; margin-left: 3px; }
.tab.cur { height: 27px; margin-top: 0; padding-top: 2px; color: #217346; background: linear-gradient(#fff, #fff 20%, #ffe9a8); border: solid #999; border-width: 0 1px 2px; border-bottom-color: #217346; }
.add { margin: 5px 0 0 31px; height: 20px; }
.sheettabs .dots { margin: 7px 16px 0 auto; }
.hscroll { display: flex; flex: 0 0 728px; margin: 5px 25px 0 0; }
.hscroll .thumb { width: 646px; height: 19px; margin-left: -1px; }
.hscroll .track { height: 19px; }

/* status bar */
.status { display: flex; flex: none; align-items: center; height: 26px; background: #f3f3f3; color: #333; padding-left: 14px; line-height: 18px; }
.ready { width: 56px; padding-bottom: 2px; }
.acc { margin: 0 2px 0 23px; }
.status b { font-weight: 500; color: #222; padding-bottom: 2px; }
.views { display: flex; align-items: center; margin-left: auto; padding-right: 11px; }
.views button { width: 50px; height: 26px; }
.views .on { background: #c6c6c6; }
.minus { width: 10px; height: 1px; margin: 0 7px; background: #333; }
.rail { width: 141px; height: 1px; background: #333; margin-right: 16px; }
.zoom { width: 38px; }
.taskbar { flex: none; height: 9px; background: #3b2c26; }
.taskbar i { display: block; width: 200px; height: 9px; margin-left: 540px; background: #655953; }

/* floating widgets */
.meter { position: absolute; right: 0; top: 566px; width: 13px; height: 74px; padding: 8px 3px 8px 5px; border-radius: 6px 0 0 6px; background: #4f5668; }
.meter i { display: block; height: 58px; background: repeating-linear-gradient(transparent 0 2px, #4f5668 2px 3px), linear-gradient(#353945 0 73%, #6fdc9a 73%, #3fc9b4); }
.ime { position: absolute; right: 137px; bottom: 10px; display: flex; flex-direction: column; align-items: center; justify-content: space-between; width: 28px; height: 56px; padding: 8px 0 6px; background: #fff; border-top: 2px dotted #ccc; }
.mark { position: absolute; right: 15px; bottom: 6px; font-size: 18px; line-height: 24px; color: #777; opacity: .8; }

/* dialog */
.dialog { position: absolute; left: 292px; top: 361px; width: 678px; background: #f0f0f0; border: 1px solid #666; box-shadow: 3px 6px 18px rgba(0,0,0,.45); color: #000; }
.dtitle { display: flex; height: 37px; background: #fff; padding-left: 9px; }
.dtitle h2 { flex: 1; margin: 0; font-size: 15px; font-weight: 400; line-height: 35px; }
.dtitle button { width: 57px; font-size: 17px; }
.dtitle button:last-child { margin-right: 2px; }
.dbody { padding: 0 8px 11px; }
.lab.l1 { height: 40px; padding-top: 15px; }
.lab.l2 { height: 43px; padding-top: 18px; }
.rules { margin: 0; padding: 1px; height: 163px; list-style: none; background: #fff; border: 2px solid #6c6c70; }
.rules li { display: flex; height: 26px; padding: 3px 0 0 8px; line-height: 22px; border-bottom: 1px solid #eee; }
.rules li::before { content: ""; width: 0; height: 0; margin: 7px 5px 0 0; border: solid transparent; border-width: 5px 0 5px 10px; border-left-color: currentColor; }
.rules .on { background: #0078d7; color: #fff; border-color: #fff; }
.desc { height: 301px; padding: 6px 0 0 8px; background: #fff; border: 1px solid #828790; }
.desc strong, .desc p { display: block; margin: 0; }
.desc p { margin-top: 8px; }
.frow { display: flex; align-items: flex-start; }
.frow > label:first-child { width: 101px; }
.s166 { width: 166px; }
.fa { height: 30px; margin-top: 6px; }
.fb { height: 37px; margin-top: 8px; }
.btn { height: 31px; width: 86px; padding-bottom: 2px; background: #e1e1e1; border: 1px solid #adadad; }
.rev { width: 133px; height: 30px; margin-left: 12px; padding-bottom: 0; }
.dsel { display: grid; grid-template-columns: 1fr 24px; height: 28px; background: #fff; border: 1px solid #adadad; }
.dsel select { grid-area: 1 / 1 / 2 / 3; width: 100%; padding: 0 0 2px 4px; }
.dsel i { grid-area: 1 / 2; display: flex; align-items: center; justify-content: center; margin: 1px 1px 1px 2px; background: #e1e1e1; border: 1px solid #adadad; pointer-events: none; }
.split { display: grid; grid-template-columns: 1fr 22px; height: 37px; background: #e1e1e1; border: 1px solid #adadad; }
.split span { display: flex; justify-content: center; padding-left: 4px; }
.split i { display: flex; align-items: center; justify-content: center; height: 29px; padding-right: 3px; border-left: 1px solid #a0a0a0; }
.chk { display: flex; align-items: center; gap: 8px; margin: 1px 0 0 11px; }
.chk input { appearance: none; width: 16px; height: 16px; border: 1px solid #333; background: #fff; }
.irow { display: grid; grid-template-columns: 128px 97px 68px 196px 106px; column-gap: 11px; height: 44px; align-items: start; }
.irow.head { height: 25px; margin-top: 6px; }
.k4 { grid-column: 4; } .k5 { grid-column: 5; }
.when { padding: 9px 0 0 2px; }
.val { display: flex; height: 28px; border: 1px solid #adadad; }
.val input { flex: 1; min-width: 0; padding-left: 4px; }
.val button { width: 25px; background: #e1e1e1; border: 1px solid #adadad; }
.actions { display: flex; justify-content: flex-end; gap: 13px; padding: 6px 6px 0 0; }
.ok { border: 2px solid #0078d7; }

/* highlight frames */
.box { position: absolute; border: 3px solid #ff3b3b; pointer-events: none; }
.b1 { left: 983px; top: 78px; width: 91px; height: 122px; }
.b2 { left: 284px; top: 354px; width: 128px; height: 45px; }
.b3 { left: 293px; top: 435px; width: 139px; height: 38px; }
.b4 { left: 93px; top: 605px; width: 212px; height: 82px; }
.b5 { left: 399px; top: 666px; width: 168px; height: 42px; }
.b6 { left: 328px; top: 754px; width: 660px; height: 203px; }
```
